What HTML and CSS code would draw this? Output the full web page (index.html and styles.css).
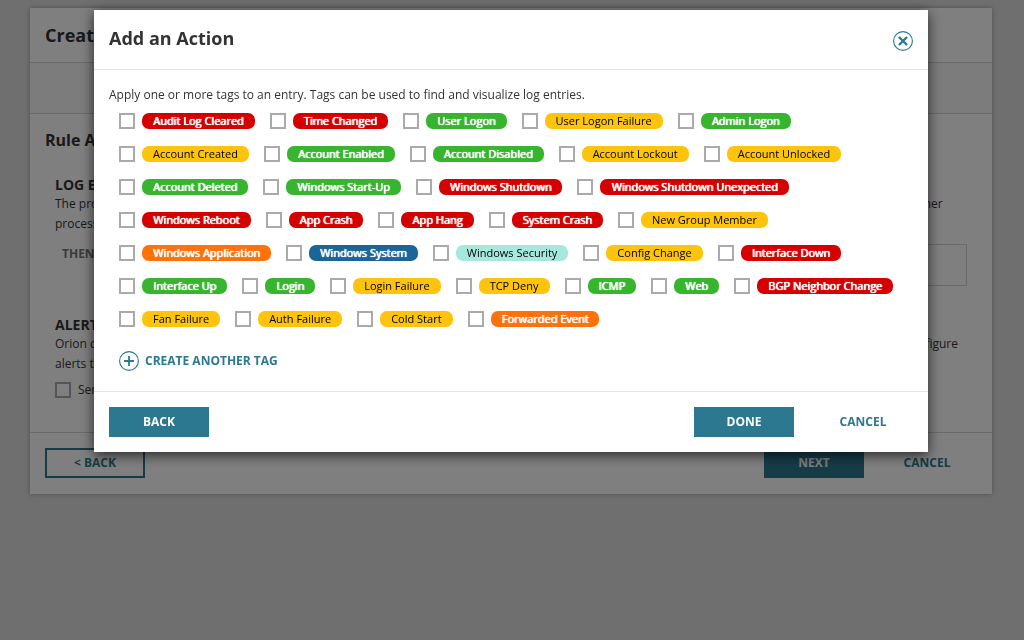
FILE: index.html
```html
<!DOCTYPE html>
<html lang="en">
<head>
<meta charset="utf-8">
<meta name="viewport" content="width=device-width, initial-scale=1">
<title>Add an Action</title>
<link rel="stylesheet" href="styles.css">
</head>
<body>
<main class="page">
  <section class="wizard">
    <header class="wizard-header"><h1 class="title">Create Rule</h1></header>
    <div class="wizard-steps"></div>
    <div class="wizard-body">
      <h2 class="title">Rule Actions</h2>
      <div class="section">
        <h3 class="section-title">LOG ENTRY ACTIONS</h3>
        <p class="text">The processing rules are applied to each log entry in the order they are listed. Add an action to tag an entry, run a program, or immediately stop all of the other processing rules.</p>
        <div class="then-row">
          <span class="then-label">THEN</span>
          <div class="action-box"></div>
        </div>
      </div>
      <div class="section">
        <h3 class="section-title">ALERT ACTIONS</h3>
        <p class="text">Orion can send log rule events to the alerting engine, so that alerts are triggered when this rule matches an entry. Once this option is already turned on, configure alerts to use it.</p>
        <label class="send"><input class="check" type="checkbox"><span>Send Log Rule Fired event</span></label>
      </div>
    </div>
    <footer class="footer">
      <button class="btn btn-outline" type="button">&lt; BACK</button>
      <div class="footer-end">
        <button class="btn" type="button">NEXT</button>
        <button class="btn btn-link" type="button">CANCEL</button>
      </div>
    </footer>
  </section>
</main>
<div class="overlay">
  <section class="dialog" role="dialog" aria-modal="true" aria-labelledby="dialog-title">
    <header class="dialog-header">
      <h2 class="title" id="dialog-title">Add an Action</h2>
      <button class="close" type="button" aria-label="Close">
        <svg width="20" height="20" viewBox="0 0 20 20" fill="none" stroke="currentColor"><circle cx="10" cy="10" r="9.4" stroke-width="1.1"/><path d="M6 6l8 8M14 6l-8 8" stroke-width="2.4"/></svg>
      </button>
    </header>
    <div class="dialog-body">
      <p class="text">Apply one or more tags to an entry. Tags can be used to find and visualize log entries.</p>
      <ul class="tags">
        <li><label class="tag"><input class="check" type="checkbox"><span class="pill red">Audit Log Cleared</span></label></li>
        <li><label class="tag"><input class="check" type="checkbox"><span class="pill red">Time Changed</span></label></li>
        <li><label class="tag"><input class="check" type="checkbox"><span class="pill green">User Logon</span></label></li>
        <li><label class="tag"><input class="check" type="checkbox"><span class="pill yellow">User Logon Failure</span></label></li>
        <li><label class="tag"><input class="check" type="checkbox"><span class="pill green">Admin Logon</span></label></li>
        <li><label class="tag"><input class="check" type="checkbox"><span class="pill yellow">Account Created</span></label></li>
        <li><label class="tag"><input class="check" type="checkbox"><span class="pill green">Account Enabled</span></label></li>
        <li><label class="tag"><input class="check" type="checkbox"><span class="pill green">Account Disabled</span></label></li>
        <li><label class="tag"><input class="check" type="checkbox"><span class="pill yellow">Account Lockout</span></label></li>
        <li><label class="tag"><input class="check" type="checkbox"><span class="pill yellow">Account Unlocked</span></label></li>
        <li><label class="tag"><input class="check" type="checkbox"><span class="pill green">Account Deleted</span></label></li>
        <li><label class="tag"><input class="check" type="checkbox"><span class="pill green">Windows Start-Up</span></label></li>
        <li><label class="tag"><input class="check" type="checkbox"><span class="pill red">Windows Shutdown</span></label></li>
        <li><label class="tag"><input class="check" type="checkbox"><span class="pill red">Windows Shutdown Unexpected</span></label></li>
        <li><label class="tag"><input class="check" type="checkbox"><span class="pill red">Windows Reboot</span></label></li>
        <li><label class="tag"><input class="check" type="checkbox"><span class="pill red">App Crash</span></label></li>
        <li><label class="tag"><input class="check" type="checkbox"><span class="pill red">App Hang</span></label></li>
        <li><label class="tag"><input class="check" type="checkbox"><span class="pill red">System Crash</span></label></li>
        <li><label class="tag"><input class="check" type="checkbox"><span class="pill yellow">New Group Member</span></label></li>
        <li><label class="tag"><input class="check" type="checkbox"><span class="pill orange">Windows Application</span></label></li>
        <li><label class="tag"><input class="check" type="checkbox"><span class="pill blue">Windows System</span></label></li>
        <li><label class="tag"><input class="check" type="checkbox"><span class="pill aqua">Windows Security</span></label></li>
        <li><label class="tag"><input class="check" type="checkbox"><span class="pill yellow">Config Change</span></label></li>
        <li><label class="tag"><input class="check" type="checkbox"><span class="pill red">Interface Down</span></label></li>
        <li><label class="tag"><input class="check" type="checkbox"><span class="pill green">Interface Up</span></label></li>
        <li><label class="tag"><input class="check" type="checkbox"><span class="pill green">Login</span></label></li>
        <li><label class="tag"><input class="check" type="checkbox"><span class="pill yellow">Login Failure</span></label></li>
        <li><label class="tag"><input class="check" type="checkbox"><span class="pill yellow">TCP Deny</span></label></li>
        <li><label class="tag"><input class="check" type="checkbox"><span class="pill green">ICMP</span></label></li>
        <li><label class="tag"><input class="check" type="checkbox"><span class="pill green">Web</span></label></li>
        <li><label class="tag"><input class="check" type="checkbox"><span class="pill red">BGP Neighbor Change</span></label></li>
        <li><label class="tag"><input class="check" type="checkbox"><span class="pill yellow">Fan Failure</span></label></li>
        <li><label class="tag"><input class="check" type="checkbox"><span class="pill yellow">Auth Failure</span></label></li>
        <li><label class="tag"><input class="check" type="checkbox"><span class="pill yellow">Cold Start</span></label></li>
        <li><label class="tag"><input class="check" type="checkbox"><span class="pill orange">Forwarded Event</span></label></li>
      </ul>
      <button class="create" type="button">
        <svg width="20" height="20" viewBox="0 0 20 20" fill="none" stroke="currentColor"><circle cx="10" cy="10" r="9.4" stroke-width="1.1"/><path d="M10 5v10M5 10h10" stroke-width="1.8"/></svg>
        <span>CREATE ANOTHER TAG</span>
      </button>
    </div>
    <footer class="footer">
      <button class="btn" type="button">BACK</button>
      <div class="footer-end">
        <button class="btn" type="button">DONE</button>
        <button class="btn btn-link" type="button">CANCEL</button>
      </div>
    </footer>
  </section>
</div>
</body>
</html>
```
FILE: styles.css
```css
* { box-sizing: border-box; }
html, body { margin: 0; }
body {
  min-height: 100vh;
  background: #dfdfdf;
  color: #333;
  font: 12px/20px "Open Sans", "Noto Sans", sans-serif;
}
h1, h2, h3, p, ul { margin: 0; padding: 0; }
button { font: inherit; padding: 0; border: 0; background: none; cursor: pointer; }
svg { display: block; }

.page { padding: 8px 32px 0 30px; }
.wizard { background: #fff; box-shadow: 0 0 5px rgba(0, 0, 0, .3); }
.title { font-size: 18px; line-height: 24px; font-weight: 700; }
.wizard-header { padding: 15px; border-bottom: 1px solid #d5d5d5; }
.wizard-steps { height: 51px; background: #f8f8f8; border-bottom: 1px solid #d5d5d5; }
.wizard-body { padding: 14px 15px 32px; }
.wizard-body .title { font-size: 16px; }
.section { padding: 24px 10px 0; }
.section-title { font-size: 14px; line-height: 18px; font-weight: 700; }
.section + .section { padding-top: 30px; }
.then-row { display: flex; gap: 16px; padding: 10px 0 0 7px; }
.then-label { color: #767676; font-weight: 700; }
.action-box { flex: 1; height: 42px; border: 1px solid #d5d5d5; }
.send { display: flex; align-items: center; gap: 7px; padding-top: 6px; }

.check {
  appearance: none;
  flex: none;
  width: 16px;
  height: 16px;
  margin: 0;
  border: 2px solid #aaa;
  background: #fff;
}
.check:checked { background: #2c7890; }

.footer {
  display: flex;
  justify-content: space-between;
  padding: 15px 15px 16px;
  border-top: 1px solid #d5d5d5;
}
.footer-end { display: flex; gap: 13px; }
.btn {
  min-width: 100px;
  height: 30px;
  background: #2c7890;
  color: #fff;
  font-weight: 700;
}
.btn-outline { border: 2px solid #2c7890; background: #fff; color: #2c7890; }
.btn-link { background: none; color: #2c7890; }

.overlay {
  position: fixed;
  inset: 0;
  padding: 10px 96px 10px 94px;
  background: rgba(0, 0, 0, .5);
  overflow: auto;
}
.dialog { background: #fff; box-shadow: 0 3px 12px rgba(0, 0, 0, .7); }
.dialog-header {
  display: flex;
  justify-content: space-between;
  align-items: flex-start;
  padding: 16px 15px 18px;
  border-bottom: 1px solid #e3e3e3;
}
.close { padding-top: 5px; color: #2c7890; }
.dialog-body { padding: 15px 15px 20px; }
.dialog .footer { padding-bottom: 15px; border-color: #e3e3e3; }
.dialog .footer-end { gap: 19px; }
.tags {
  display: flex;
  flex-wrap: wrap;
  gap: 17px 15px;
  padding: 8px 0 0 10px;
  list-style: none;
}
.tag { display: flex; gap: 7px; }
.pill {
  padding: 0 11px;
  border-radius: 7px;
  color: #fff;
  font-size: 11px;
  line-height: 16px;
  white-space: nowrap;
}
.red, .green, .orange, .blue { text-shadow: 0 0 1px #fff, 1px 0 rgba(255, 255, 255, .8); }
.red { background: #d50000; }
.green { background: #37b52e; }
.yellow { background: #fec40d; color: #000; }
.orange { background: #ff7209; }
.blue { background: #1b6698; }
.aqua { background: #a7e8dd; color: #000; }
.create {
  display: flex;
  align-items: center;
  gap: 6px;
  margin: 24px 0 0 10px;
  color: #2c7890;
  font-weight: 700;
}
```
